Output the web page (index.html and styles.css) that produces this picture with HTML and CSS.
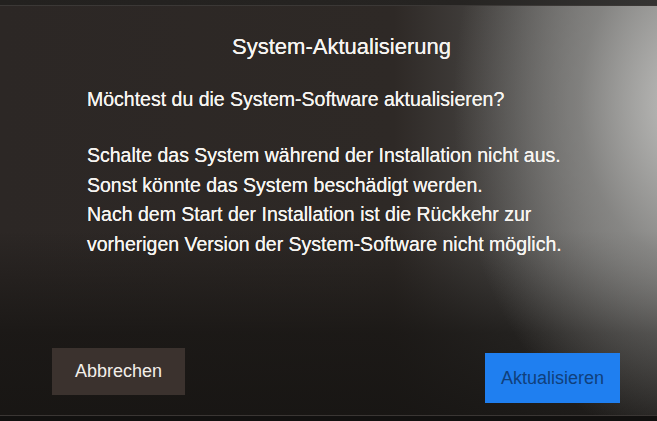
FILE: index.html
```html
<!DOCTYPE html>
<html lang="de">
<head>
    <meta charset="UTF-8">
    <meta name="viewport" content="width=device-width, initial-scale=1.0">
    <title>System-Aktualisierung</title>
    <link rel="stylesheet" href="styles.css">
</head>
<body>
    <div class="bezel-top"></div>
    <div class="screen">
        <h1 class="title">System-Aktualisierung</h1>

        <div class="message">
            <p class="question">Möchtest du die System-Software aktualisieren?</p>
            <p class="details">
                Schalte das System während der Installation nicht aus.<br>
                Sonst könnte das System beschädigt werden.<br>
                Nach dem Start der Installation ist die Rückkehr zur<br>
                vorherigen Version der System-Software nicht möglich.
            </p>
        </div>

        <div class="actions">
            <button class="btn btn-cancel">Abbrechen</button>
            <button class="btn btn-update">Aktualisieren</button>
        </div>
    </div>
    <div class="bezel-bottom"></div>
</body>
</html>
```

FILE: styles.css
```css
* {
    margin: 0;
    padding: 0;
    box-sizing: border-box;
}

html, body {
    height: 100%;
}

body {
    font-family: "Liberation Sans", Arial, sans-serif;
    background: #1b1917;
    color: #f6f4f0;
    display: flex;
    flex-direction: column;
    overflow: hidden;
}

.bezel-top {
    height: 6px;
    background: linear-gradient(to right, #23211f 0%, #262422 70%, #353433 100%);
    border-bottom: 1px solid #3b3836;
}

.screen {
    flex: 1;
    display: flex;
    flex-direction: column;
    background:
        radial-gradient(ellipse 230px 340px at 104% 24%, rgba(196, 196, 194, 0.9) 0%, rgba(150, 150, 148, 0.6) 45%, rgba(80, 78, 76, 0) 100%),
        linear-gradient(to bottom, rgba(0, 0, 0, 0) 0%, rgba(0, 0, 0, 0) 55%, rgba(22, 20, 18, 0.75) 80%, rgba(22, 20, 18, 0.9) 100%),
        linear-gradient(to right, #2c2725 0%, #2e2926 60%, #4a4846 78%, #7c7b79 100%);
}

.title {
    font-size: 22px;
    font-weight: normal;
    text-align: center;
    padding: 28px 0 0 26px;
    line-height: 26px;
    text-shadow: 0 0 0.6px #fff;
}

.message {
    padding: 0 0 0 87px;
    text-shadow: 0 0 0.4px #fff;
}

.question {
    font-size: 19.5px;
    line-height: 24px;
    margin-top: 27px;
}

.details {
    font-size: 19.5px;
    line-height: 29.5px;
    margin-top: 30px;
}

.actions {
    margin-top: auto;
    display: flex;
    justify-content: space-between;
    align-items: flex-start;
    padding: 0 37px 12px 52px;
}

.btn {
    font-family: inherit;
    font-size: 18px;
    border: none;
}

.btn-cancel {
    width: 133px;
    height: 47px;
    background: #3b322e;
    color: #f2efea;
}

.btn-update {
    width: 135px;
    height: 50px;
    margin-top: 5px;
    background: #1f7ff0;
    color: #10407c;
}

.bezel-bottom {
    height: 6px;
    background: #121110;
    border-top: 1px solid #3a3634;
}
```
